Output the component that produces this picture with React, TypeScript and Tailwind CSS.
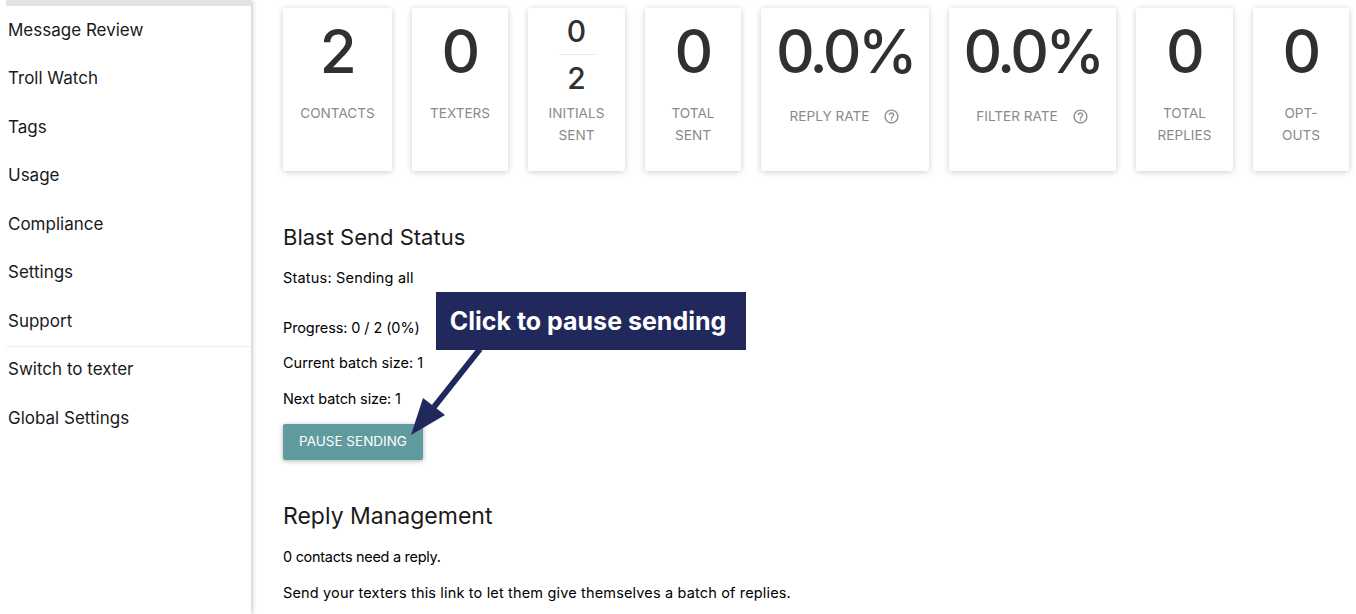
import React from 'react'

const navItems = ['Message Review', 'Troll Watch', 'Tags', 'Usage', 'Compliance', 'Settings', 'Support']

const HelpIcon = () => (
  <svg width="17" height="17" viewBox="0 0 24 24" fill="#8f8f8f" className="ml-[14px]">
    <path d="M11 18h2v-2h-2v2zm1-16C6.48 2 2 6.48 2 12s4.48 10 10 10 10-4.48 10-10S17.52 2 12 2zm0 18c-4.41 0-8-3.59-8-8s3.59-8 8-8 8 3.59 8 8-3.59 8-8 8zm0-14c-2.21 0-4 1.79-4 4h2c0-1.1.9-2 2-2s2 .9 2 2c0 2-3 1.75-3 5h2c0-2.25 3-2.5 3-5 0-2.21-1.79-4-4-4z" />
  </svg>
)

const Card = ({ value, label, width, help }: { value: string; label: string; width: string; help?: boolean }) => (
  <div className={`${width} h-[163px] shrink-0 rounded-[2px] bg-white shadow-[0_1px_6px_rgba(0,0,0,0.2)] flex flex-col items-center`}>
    {help ? (
      <div className="mt-[11px] h-[64px] text-[60px] font-medium leading-[64px] tracking-[-3.5px] text-[#303030]">{value}</div>
    ) : (
      <div className="mt-[11px] h-[64px] text-[60px] font-medium leading-[64px] tracking-[-1.5px] text-[#303030]">{value}</div>
    )}
    {help ? (
      <div className="mt-[22px] flex items-center text-[13.6px] leading-[22px] text-[#8a8a8a]">
        {label}
        <HelpIcon />
      </div>
    ) : (
      <div className="mt-[19px] px-[20px] text-center text-[13.6px] leading-[22px] text-[#8a8a8a]">{label}</div>
    )}
  </div>
)

const InitialsCard = () => (
  <div className="w-[97px] h-[163px] shrink-0 rounded-[2px] bg-white shadow-[0_1px_6px_rgba(0,0,0,0.2)] flex flex-col items-center">
    <div className="mt-[6px] h-[41px] w-[36px] border-b border-[#e6e6e6] text-center text-[30px] font-medium leading-[34px] text-[#303030]">0</div>
    <div className="h-[40px] pt-[4px] text-[30px] font-medium leading-[38px] text-[#303030]">2</div>
    <div className="mt-[7px] px-3 text-center text-[13.6px] leading-[22px] text-[#8a8a8a]">INITIALS SENT</div>
  </div>
)

export default function App() {
  return (
    <div className="relative flex h-[614px] w-[1356px] overflow-hidden bg-white text-black font-['Inter',sans-serif]">
      <aside className="z-10 h-full w-[251px] shrink-0 bg-white shadow-[1px_0_5px_rgba(0,0,0,0.25)]">
        <div className="ml-[6px] h-[6px] bg-[#e4e4e4]" />
        <nav className="pt-[0.6px]">
          {navItems.map(item => (
            <div key={item} className="h-[48.5px] pl-2 text-[17px] leading-[47px] text-[#1a1a1a]">
              {item}
            </div>
          ))}
          <div className="ml-[6px] -mb-px h-px bg-[#eeeeee]" />
          <div className="h-[48.5px] pl-2 text-[17px] leading-[47px] text-[#1a1a1a]">Switch to texter</div>
          <div className="h-[48.5px] pl-2 text-[17px] leading-[47px] text-[#1a1a1a]">Global Settings</div>
        </nav>
      </aside>

      <main className="flex-1 pl-[32px] pt-2">
        <div className="flex gap-[20px]">
          <Card value="2" label="CONTACTS" width="w-[109px]" />
          <Card value="0" label="TEXTERS" width="w-[96px]" />
          <InitialsCard />
          <Card value="0" label="TOTAL SENT" width="w-[96px]" />
          <Card value="0.0%" label="REPLY RATE" width="w-[168px]" help />
          <Card value="0.0%" label="FILTER RATE" width="w-[167px]" help />
          <Card value="0" label="TOTAL REPLIES" width="w-[97px]" />
          <Card value="0" label="OPT-OUTS" width="w-[96px]" />
        </div>

        <h2 className="mt-[51px] text-[22px] leading-[30px] text-[#1a1a1a]">Blast Send Status</h2>
        <p className="mt-[16px] text-[14.5px] leading-[20px] tracking-[0.2px]">Status: Sending all</p>
        <p className="mt-[30px] text-[14.5px] leading-[20px] tracking-[-0.1px]">Progress: 0 / 2 (0%)</p>
        <p className="mt-[15px] text-[14.5px] leading-[20px]">Current batch size: 1</p>
        <p className="mt-[16px] text-[14.5px] leading-[20px] tracking-[-0.15px]">Next batch size: 1</p>
        <button className="mt-[15px] h-[36px] w-[140px] rounded-[2px] bg-[#5f9b9f] pb-[2px] text-[13.5px] text-white shadow-[0_1px_5px_rgba(0,0,0,0.3)]">
          PAUSE SENDING
        </button>

        <h2 className="mt-[41px] text-[23px] leading-[30px] text-[#1a1a1a]">Reply Management</h2>
        <p className="mt-[16px] text-[14.5px] leading-[20px] tracking-[-0.3px]">0 contacts need a reply.</p>
        <p className="mt-[16px] text-[14.5px] leading-[20px] tracking-[0.16px]">Send your texters this link to let them give themselves a batch of replies.</p>
      </main>

      <div className="absolute left-[436px] top-[292px] flex h-[58px] w-[310px] items-center justify-center bg-[#21295c] pr-[6px] pt-[1px] text-[25px] font-bold text-white">
        Click to pause sending
      </div>
      <svg className="absolute left-[405px] top-[345px]" width="85" height="95" viewBox="0 0 85 95">
        <path d="M75 4 L29 62" stroke="#21295c" strokeWidth="6" fill="none" />
        <path d="M6 90 L18 53 L40 70 Z" fill="#21295c" />
      </svg>
    </div>
  )
}
